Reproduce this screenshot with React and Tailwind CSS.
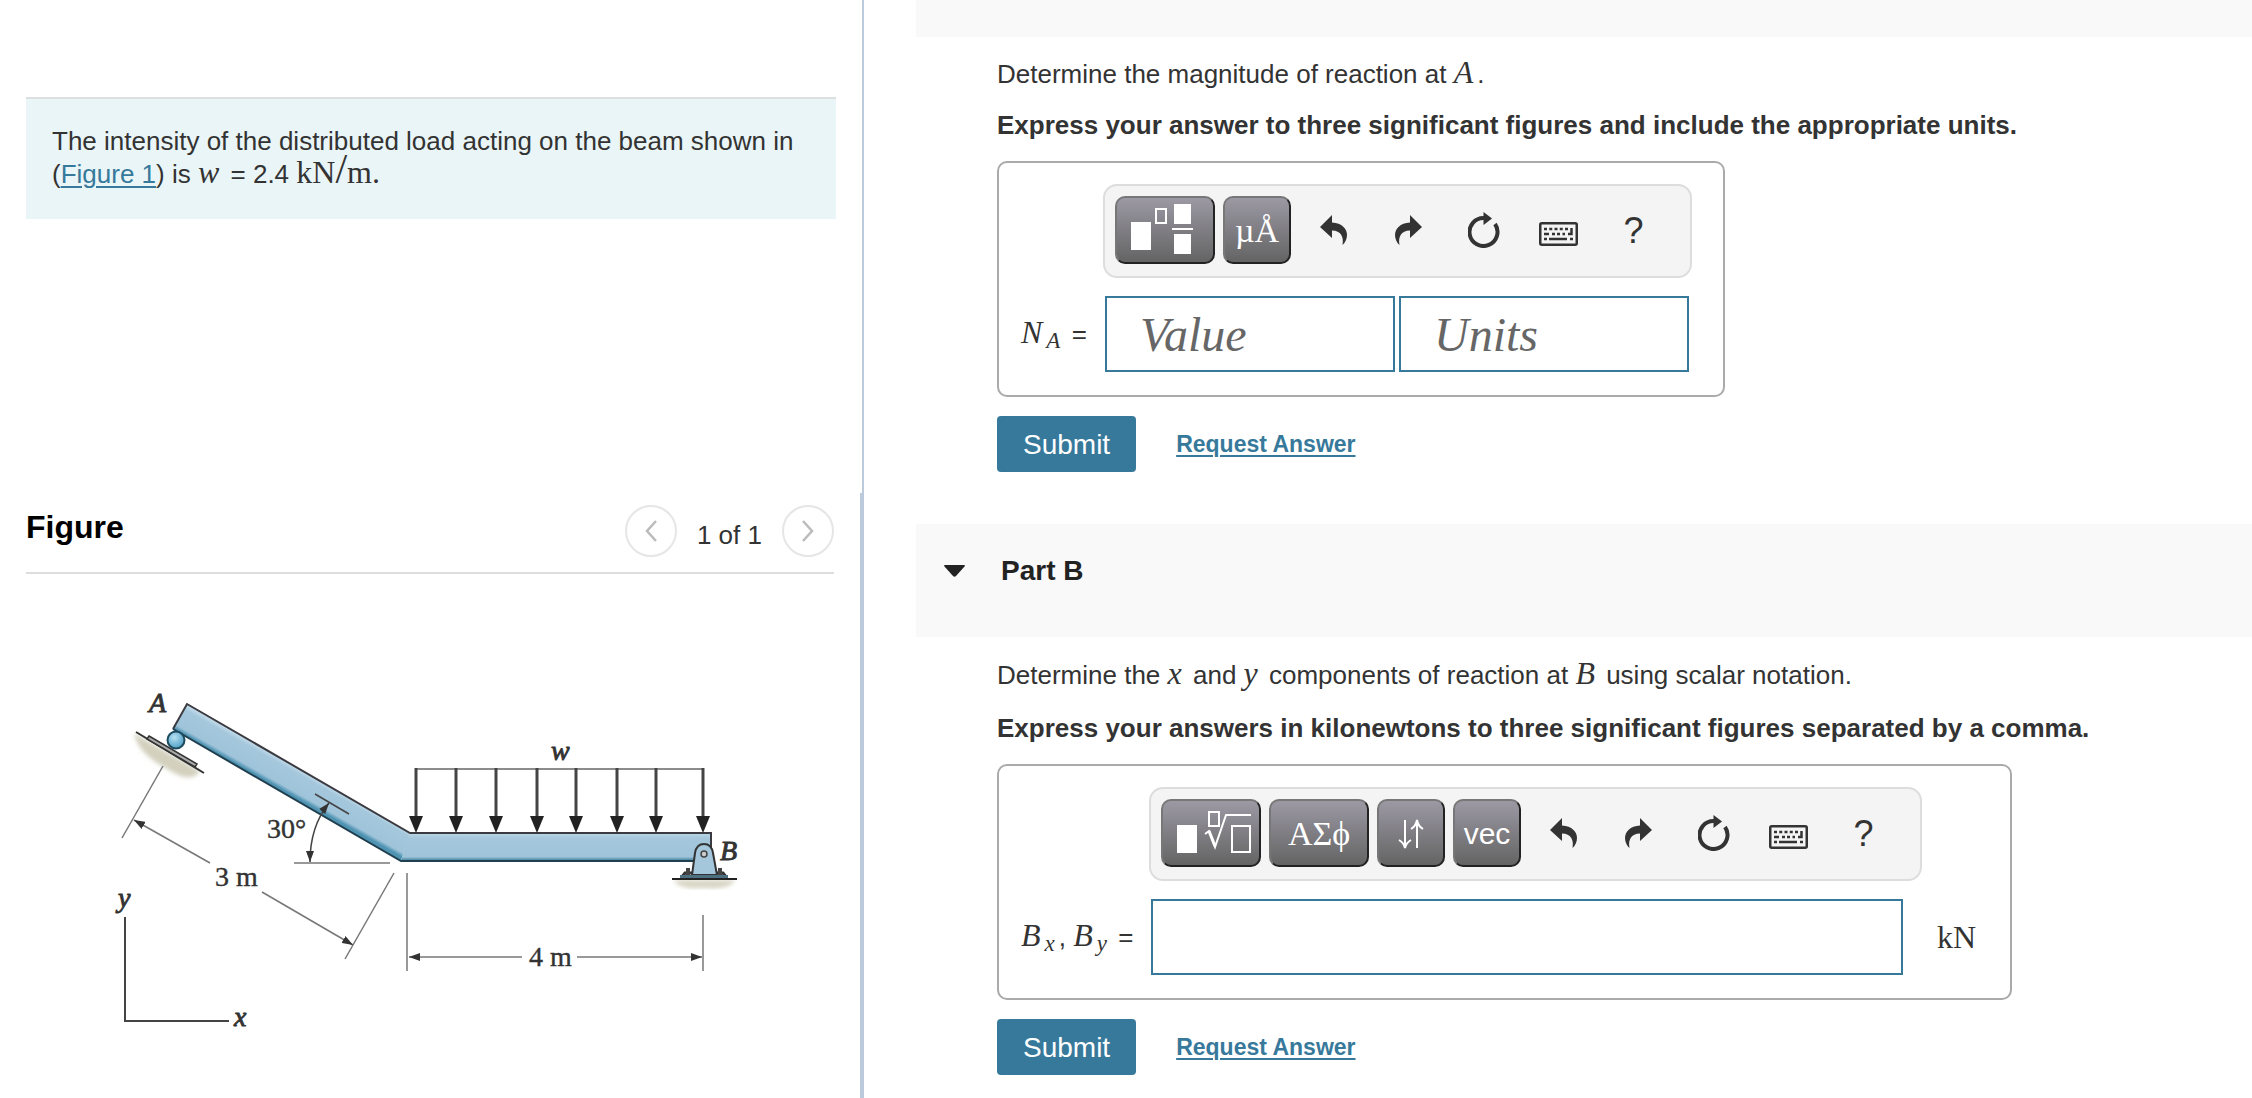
import React, { useState } from 'react';

const loadArrows = [416, 456, 496, 537, 576, 617, 656, 703];

const Var = ({ children }) => (
	<i className="mr-1 font-['Liberation_Serif',serif] text-[32px] leading-[0]">{children}</i>
);

const Sub = ({ children }) => (
	<sub className="mr-1 font-['Liberation_Serif',serif] text-[23px] leading-[0] italic">{children}</sub>
);

const BeamFigure = () => (
	<svg
		className="block w-full max-w-[680px]"
		viewBox="90 660 680 400"
		role="img"
		aria-label="Bent beam with roller at A and pin at B"
		fontFamily="'Liberation Serif', serif"
	>
		<defs>
			<linearGradient id="slope" gradientUnits="userSpaceOnUse" x1="300" y1="768" x2="287" y2="791">
				<stop offset="0" stopColor="#c4dcea" />
				<stop offset="0.2" stopColor="#a4c7dc" />
				<stop offset="0.85" stopColor="#9fc4da" />
				<stop offset="1" stopColor="#4f93b2" />
			</linearGradient>
			<linearGradient id="flat" x1="0" y1="0" x2="0" y2="1">
				<stop offset="0" stopColor="#bcd7e6" />
				<stop offset="0.2" stopColor="#a4c7dc" />
				<stop offset="0.85" stopColor="#9fc4da" />
				<stop offset="1" stopColor="#2f7896" />
			</linearGradient>
			<radialGradient id="ball" cx="0.4" cy="0.35" r="0.7">
				<stop offset="0" stopColor="#b5e0f2" />
				<stop offset="1" stopColor="#4a9cc4" />
			</radialGradient>
			<filter id="soft">
				<feGaussianBlur stdDeviation="2" />
			</filter>
			<marker id="arrow" viewBox="0 0 11 8" refX="11" refY="4" markerWidth="11" markerHeight="8" markerUnits="userSpaceOnUse" orient="auto-start-reverse">
				<path d="M0 0 L11 4 L0 8 Z" fill="#333" />
			</marker>
		</defs>

		{/* ground under the supports */}
		<path d="M134 732 L200 770 C196 778 184 778 174 772 C156 762 138 752 134 732 Z" fill="#d3d0be" filter="url(#soft)" />
		<path d="M674 879 L735 879 C730 888 716 888 704 887 C690 888 678 887 674 879 Z" fill="#d8d5c4" filter="url(#soft)" />

		{/* roller A */}
		<path d="M136 731 L204 772" stroke="#333" strokeWidth="2" />
		<path d="M149 735 L197 763 L195 766 L147 738 Z" fill="#aaa" stroke="#333" strokeWidth="1.5" />

		{/* beam */}
		<path d="M187 703 L410 832 L401 860 L173 728 Z" fill="url(#slope)" />
		<path d="M409 832 H711 V860 H401 Z" fill="url(#flat)" />
		<path d="M173 728 L187 703 L410 832 H711 V860" fill="none" stroke="#3a3a40" strokeWidth="2" />
		<path d="M173 728 L401 860 H711" fill="none" stroke="#1f3f4f" strokeWidth="2" />
		<circle cx="176" cy="739" r="8.5" fill="url(#ball)" stroke="#1f4a5e" strokeWidth="2" />

		{/* pin B */}
		<path d="M692 874 L695 852 C696 846 699 843 704 843 C709 843 712 846 713 852 L717 874 Z" fill="#a4c7dc" stroke="#333" strokeWidth="2" />
		<path d="M681 877 L685 872 H692 M727 877 L723 872 H716" fill="none" stroke="#333" strokeWidth="3" />
		<path d="M688 867 V874 M720 867 V874" stroke="#444" strokeWidth="4" />
		<path d="M680 876 H728" stroke="#4d7080" strokeWidth="4" />
		<path d="M672 878 H737" stroke="#222" strokeWidth="2" />
		<circle cx="704" cy="853" r="3" fill="#ccc" stroke="#444" strokeWidth="1.5" />

		{/* distributed load */}
		<path d="M415 768 H704" stroke="#666" strokeWidth="1.5" />
		{loadArrows.map((x) => (
			<g key={x}>
				<path d={`M${x} 767 V818`} stroke="#444" strokeWidth="3" />
				<path d={`M${x - 7} 815 H${x + 7} L${x} 832 Z`} fill="#222" />
			</g>
		))}

		{/* dimensions */}
		<g fill="none" stroke="#777" strokeWidth="1.5">
			<path d="M163 765 L122 837" />
			<path d="M394 872 L345 958" />
			<path d="M134 819 L210 862" markerStart="url(#arrow)" />
			<path d="M262 891 L353 944" markerEnd="url(#arrow)" />
			<path d="M407 872 V970" />
			<path d="M703 914 V970" />
			<path d="M409 956 H522" markerStart="url(#arrow)" />
			<path d="M577 956 H702" markerEnd="url(#arrow)" />
			<path d="M294 862 H390" />
			<path d="M315 793 L349 813" stroke="#444" />
			<path d="M310 861 C310 838 316 818 329 802" stroke="#444" markerStart="url(#arrow)" markerEnd="url(#arrow)" />
		</g>
		<path d="M125 916 V1020 H229" fill="none" stroke="#444" strokeWidth="2" />

		<g fill="#333" stroke="#333" strokeWidth="0.4" fontSize="28">
			<text x="267" y="837">30°</text>
			<text x="215" y="885">3 m</text>
			<text x="529" y="965">4 m</text>
			<g fontStyle="italic" strokeWidth="0.9">
				<text x="149" y="711">A</text>
				<text x="720" y="859">B</text>
				<text x="551" y="759">w</text>
				<text x="118" y="906">y</text>
				<text x="234" y="1025">x</text>
			</g>
		</g>
	</svg>
);

const PaletteButton = ({ label, wide, children }) => (
	<button
		type="button"
		aria-label={label}
		className={`${wide ? 'w-[100px]' : 'w-[68px]'} flex h-[68px] items-center justify-center rounded-[10px] border-2 border-t-[#777] border-r-[#222] border-b-[#222] border-l-[#777] bg-linear-to-b from-[#9c99a4] to-[#646464] text-white`}
	>
		{children}
	</button>
);

const TemplateIcon = () => (
	<svg className="size-full" viewBox="2 2 96 64" fill="#fff">
		<rect x="16" y="26" width="20" height="28" />
		<rect x="41" y="13" width="10" height="14" fill="none" stroke="#fff" strokeWidth="2" />
		<rect x="59" y="8" width="17" height="20" />
		<rect x="57" y="32" width="21" height="2" />
		<rect x="59" y="38" width="17" height="20" />
	</svg>
);

const RootIcon = () => (
	<svg className="size-full" viewBox="2 2 96 64" fill="none" stroke="#fff" strokeWidth="2">
		<rect x="16" y="26" width="20" height="28" fill="#fff" stroke="none" />
		<rect x="48" y="13" width="10" height="14" />
		<path d="M44 35 L48 32 L54 48 L65 16 H90" />
		<path d="M48 32 L54 47" strokeWidth="3" />
		<rect x="71" y="27" width="18" height="26" />
	</svg>
);

const UpDownIcon = () => (
	<svg className="size-full" viewBox="2 2 64 64" fill="none" stroke="#fff" strokeWidth="2">
		<path d="M28 21 V48 M22 41 Q27 44 28 49 Q29 44 34 41" />
		<path d="M40 49 V22 M34 30 Q39 27 40 21 Q41 27 46 30" />
	</svg>
);

const UndoIcon = ({ className = '' }) => (
	<svg className={`h-[30px] w-[27px] ${className}`} viewBox="0 0 27 30" fill="#333">
		<path d="M0 12 L12 0 V7.5 C22 8 27 14 27 20 C27 24 25 28 22.5 30 C24 22 21 15.5 12 15.5 V23 Z" />
	</svg>
);

const ResetIcon = () => (
	<svg className="h-9 w-8" viewBox="0 0 32 36">
		<path d="M27 12 A14 14 0 1 1 16 6" fill="none" stroke="#333" strokeWidth="4" />
		<path d="M15.5 0 L24 6.5 L15.5 13 Z" fill="#333" />
	</svg>
);

const KeyboardIcon = () => (
	<svg className="mt-2 h-6 w-[39px]" viewBox="0 0 39 24" fill="none" stroke="#333" strokeWidth="2.5">
		<rect x="1.25" y="1.25" width="36.5" height="21.5" rx="1.5" />
		<path d="M5 7 H29" strokeDasharray="3 2.25" />
		<path d="M5 12 H10 M13 12 H16 M18 12 H21 M23.5 12 H26 M29 12 H32.5 V6" />
		<path d="M5 17 H8 M10 17 H28 M31 17 H34" />
	</svg>
);

const ToolButton = ({ label, children }) => (
	<button
		type="button"
		aria-label={label}
		className="flex w-[75px] items-center justify-center text-[36px] text-[#333]"
	>
		{children}
	</button>
);

const Toolbar = ({ children }) => (
	<div className="flex w-fit rounded-[14px] border-2 border-[#ddd] bg-[#f4f4f4] pt-[10px] pr-[19px] pb-3 pl-[10px]">
		<div className="flex gap-2">{children}</div>
		<div className="ml-[5px] flex">
			<ToolButton label="Undo"><UndoIcon /></ToolButton>
			<ToolButton label="Redo"><UndoIcon className="-scale-x-100" /></ToolButton>
			<ToolButton label="Reset"><ResetIcon /></ToolButton>
			<ToolButton label="Keyboard shortcuts"><KeyboardIcon /></ToolButton>
			<ToolButton label="Help">?</ToolButton>
		</div>
	</div>
);

const inputClass = "h-[76px] border-2 border-[#37799b] bg-white px-[33px] font-['Liberation_Serif',serif] text-[48px] text-[#333] outline-none placeholder:text-[#666] placeholder:italic";

const SubmitRow = () => (
	<div className="mt-[19px] flex items-center gap-10">
		<button type="submit" className="h-14 rounded bg-[#37799b] px-[26px] text-[28px] text-white">
			Submit
		</button>
		<a href="#request" className="text-[23px] font-bold text-[#37799b] underline decoration-2 underline-offset-3">
			Request Answer
		</a>
	</div>
);

const App = () => {
	const [value, setValue] = useState('');
	const [units, setUnits] = useState('');
	const [components, setComponents] = useState('');
	const [open, setOpen] = useState(true);

	const handleSubmit = (e) => e.preventDefault();

	return (
		<div className="grid min-h-screen grid-cols-[864fr_1388fr] bg-white font-['Liberation_Sans',Arial,sans-serif] text-[26px] leading-[33px] text-[#333]">
			<aside className="flex flex-col">
				<section className="min-h-[493px] border-r-2 border-[#bccbdb] px-[26px] pt-[97px]">
					<p className="border-t-2 border-[#dcdfdf] bg-[#eaf5f7] px-[26px] pt-[26px] pb-7">
						The intensity of the distributed load acting on the beam shown in (<a href="#figure" className="text-[#37799b] underline decoration-2 underline-offset-3">Figure 1</a>) is <Var>w</Var> = 2.4 <span className="font-['Liberation_Serif',serif] text-[32px] leading-[0]">kN<span className="text-[42px]">/</span>m.</span>
					</p>
				</section>

				<section id="figure" className="grow border-r-4 border-[#bccbdb] px-[26px] pt-3">
					<div className="flex items-center justify-between border-b-2 border-[#ddd] pb-[15px]">
						<h2 className="self-start text-[32px] leading-[44px] font-bold text-black">Figure</h2>
						<div className="flex items-center gap-5">
							<button type="button" aria-label="Previous figure" className="flex size-[52px] items-center justify-center rounded-full border-2 border-[#e6e6e6]">
								<svg className="h-[22px] w-3" viewBox="0 0 12 22" fill="none" stroke="#bbb" strokeWidth="2.5">
									<path d="M11 1 L2 11 L11 21" />
								</svg>
							</button>
							<span className="pt-2">1 of 1</span>
							<button type="button" aria-label="Next figure" className="flex size-[52px] items-center justify-center rounded-full border-2 border-[#e6e6e6]">
								<svg className="h-[22px] w-3" viewBox="0 0 12 22" fill="none" stroke="#bbb" strokeWidth="2.5">
									<path d="M1 1 L10 11 L1 21" />
								</svg>
							</button>
						</div>
					</div>
					<div className="px-16 pt-[87px]">
						<BeamFigure />
					</div>
				</section>
			</aside>

			<main className="pb-6 pl-[52px]">
				<div className="h-[37px] bg-[#f9f9f9]" />

				<form onSubmit={handleSubmit} className="pt-[21px] pl-[81px]">
					<p>Determine the magnitude of reaction at <Var>A</Var>.</p>
					<p className="mt-[18px] font-bold">
						Express your answer to three significant figures and include the appropriate units.
					</p>
					<div className="mt-[19px] w-fit rounded-[10px] border-2 border-[#aaa] pt-[21px] pr-[31px] pb-[23px] pl-[22px]">
						<div className="ml-[82px]">
							<Toolbar>
								<PaletteButton label="Templates" wide><TemplateIcon /></PaletteButton>
								<PaletteButton label="Units symbols">
									<span className="font-['Liberation_Serif',serif] text-[34px]">µÅ</span>
								</PaletteButton>
							</Toolbar>
						</div>
						<div className="mt-[18px] flex items-center">
							<label htmlFor="value" className="w-[84px] whitespace-nowrap">
								<Var>N</Var><Sub>A</Sub> =
							</label>
							<div className="flex gap-1">
								<input id="value" className={`${inputClass} w-[290px]`} placeholder="Value" value={value} onChange={(e) => setValue(e.target.value)} />
								<input aria-label="Units" className={`${inputClass} w-[290px]`} placeholder="Units" value={units} onChange={(e) => setUnits(e.target.value)} />
							</div>
						</div>
					</div>
					<SubmitRow />
				</form>

				<div className="mt-[52px] h-[113px] bg-[#f9f9f9] pt-[30px] pl-7">
					<button type="button" aria-expanded={open} onClick={() => setOpen(!open)} className="flex items-center gap-9 text-[28px] font-bold text-[#222]">
						<svg className={`h-3 w-[21px] ${open ? '' : '-rotate-90'}`} viewBox="0 0 21 12" fill="#222">
							<path d="M1 0 H20 Q21.5 0 20.5 1.5 L12 11 Q10.5 12.5 9 11 L0.5 1.5 Q-0.5 0 1 0 Z" />
						</svg>
						Part B
					</button>
				</div>

				{open && (
					<form onSubmit={handleSubmit} className="pt-[22px] pl-[81px]">
						<p>
							Determine the <Var>x</Var> and <Var>y</Var> components of reaction at <Var>B</Var> using scalar notation.
						</p>
						<p className="mt-5 font-bold">
							Express your answers in kilonewtons to three significant figures separated by a comma.
						</p>
						<div className="mt-[19px] w-fit rounded-[10px] border-2 border-[#aaa] pt-[21px] pr-[34px] pb-[23px] pl-[22px]">
							<div className="ml-[128px]">
								<Toolbar>
									<PaletteButton label="Templates" wide><RootIcon /></PaletteButton>
									<PaletteButton label="Greek letters" wide>
										<span className="font-['Liberation_Serif',serif] text-[34px]">ΑΣϕ</span>
									</PaletteButton>
									<PaletteButton label="Arrows"><UpDownIcon /></PaletteButton>
									<PaletteButton label="Vectors"><span className="text-[30px]">vec</span></PaletteButton>
								</Toolbar>
							</div>
							<div className="mt-[18px] flex items-center">
								<label htmlFor="components" className="w-[130px] whitespace-nowrap">
									<Var>B</Var><Sub>x</Sub>, <Var>B</Var><Sub>y</Sub> =
								</label>
								<input id="components" className={`${inputClass} w-[752px]`} value={components} onChange={(e) => setComponents(e.target.value)} />
								<span className="pl-[34px] font-['Liberation_Serif',serif] text-[32px]">kN</span>
							</div>
						</div>
						<SubmitRow />
					</form>
				)}
			</main>
		</div>
	);
};

export default App;
